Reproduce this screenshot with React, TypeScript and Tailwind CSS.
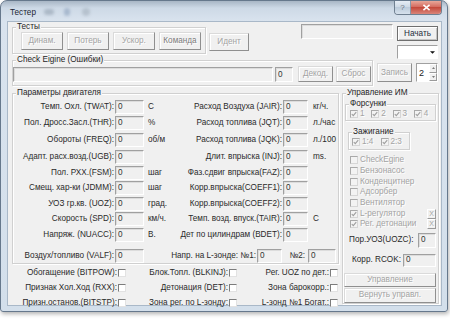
import React from 'react';

const DIS = "text-[#a3a3a3] [text-shadow:1px_1px_0_#ffffff]";

function Btn({ label, cls = '', dis = true }: { label: string; cls?: string; dis?: boolean }) {
    return (
        <div className={"flex items-center justify-center shrink-0 bg-[#f0f0f0] border border-t-[#dadada] border-l-[#dadada] border-r-[#8f8f8f] border-b-[#8f8f8f] shadow-[inset_1px_1px_0_#ffffff] " + (dis ? DIS : 'text-[#3a3a3a]') + ' ' + cls}>
            {label}
        </div>
    );
}

function Fld({ v = '0', cls = '' }: { v?: string; cls?: string }) {
    return (
        <div className={"flex items-center shrink-0 pl-[2px] bg-[#f0f0f0] border border-t-[#a0a0a0] border-l-[#a0a0a0] border-r-[#ffffff] border-b-[#ffffff] shadow-[inset_1px_1px_0_#dcdcdc] text-[#333] " + cls}>
            {v}
        </div>
    );
}

function Chk({ checked = false, dis = true, cls = '' }: { checked?: boolean; dis?: boolean; cls?: string }) {
    return (
        <div className={"w-[8px] h-[8px] shrink-0 border flex items-center justify-center " + (dis ? "border-t-[#a9a9a9] border-l-[#a9a9a9] border-r-[#d6d6d6] border-b-[#d6d6d6] bg-[#f3f3f3]" : "border-t-[#7c7c7c] border-l-[#7c7c7c] border-r-[#e2e2e2] border-b-[#e2e2e2] bg-white") + ' ' + cls}>
            {checked && (
                <svg viewBox="0 0 8 8" className="w-[6px] h-[6px]">
                    <path d="M1 4 L3 6.2 L7 1.5" fill="none" stroke="#9c9c9c" strokeWidth="1.4" />
                </svg>
            )}
        </div>
    );
}

function Group({ title, cls, children }: { title: string; cls: string; children?: React.ReactNode }) {
    return (
        <fieldset className={"min-w-0 shrink-0 border border-[#d0d0d0] shadow-[inset_1px_1px_0_#ffffff,1px_1px_0_#ffffff] " + cls}>
            <legend className="ml-[3px] px-[1px] leading-[8px] bg-[#f0f0f0] text-[#262626]">{title}</legend>
            {children}
        </fieldset>
    );
}

const rows = [
    { h: 'h-[16px]', l1: 'Темп. Охл. (TWAT):', u1: 'С', l2: 'Расход Воздуха (JAIR):', u2: 'кг/ч.' },
    { h: 'h-[16px]', l1: 'Пол. Дросс.Засл.(THR):', u1: '%', l2: 'Расход топлива (JQT):', u2: 'л./час' },
    { h: 'h-[18px]', l1: 'Обороты (FREQ):', u1: 'об/м', l2: 'Расход топлива (JQK):', u2: 'л./100' },
    { h: 'h-[16px]', l1: 'Адапт. расх.возд.(UGB):', u1: '', l2: 'Длит. впрыска (INJ):', u2: 'ms.' },
    { h: 'h-[15px]', l1: 'Пол. РХХ.(FSM):', u1: 'шаг', l2: 'Фаз.сдвиг впрыска(FAZ):', u2: '' },
    { h: 'h-[16px]', l1: 'Смещ. хар-ки (JDMM):', u1: 'шаг', l2: 'Корр.впрыска(COEFF1):', u2: '' },
    { h: 'h-[15px]', l1: 'УОЗ гр.кв. (UOZ):', u1: 'град.', l2: 'Корр.впрыска(COEFF2):', u2: '' },
    { h: 'h-[15px]', l1: 'Скорость (SPD):', u1: 'км/ч.', l2: 'Темп. возд. впуск.(TAIR):', u2: 'С' },
    { h: 'h-[18px]', l1: 'Напряж. (NUACC):', u1: 'В.', l2: 'Дет по цилиндрам (BDET):', u2: '' },
];

const flags = [
    ['Обогащение (BITPOW):', 'Блок.Топл. (BLKINJ):', 'Рег. UOZ по дет.:'],
    ['Признак Хол.Ход (RXX):', 'Детонация (DET):', 'Зона барокорр.:'],
    ['Призн.останов.(BITSTP):', 'Зона рег. по L-зонду:', 'L-зонд №1 Богат.:'],
];

const outputs = [
    { t: 'CheckEgine', c: false, x: false },
    { t: 'Бензонасос', c: false, x: false },
    { t: 'Конденцитнер', c: false, x: false },
    { t: 'Адсорбер', c: false, x: false },
    { t: 'Вентилятор', c: false, x: false },
    { t: 'L-регулятор', c: true, x: true },
    { t: 'Рег. детонации', c: true, x: true },
];

function App() {
    return (
        <div className="w-[450px] h-[319px] bg-white overflow-hidden font-['Liberation_Sans',Arial,sans-serif] text-[8.2px] leading-[10px] text-[#2a2a2a]">
            <div className="w-[448px] h-[312px] flex flex-col border border-[#66788c] rounded-t-[7px] rounded-b-[3px] bg-[linear-gradient(to_bottom,#a8b6c5_0px,#cdd9e6_7px,#d9e3ee_20px,#d3dfeb_100%)] shadow-[1px_2px_4px_rgba(0,0,0,0.3)]">
                {/* title bar */}
                <div className="h-[20px] flex items-start shrink-0">
                    <div className="ml-[9px] mt-[7px] text-[#1c2633]">Тестер</div>
                    <div className="ml-[8px] mt-[8px] w-[10px] h-[6px] rounded-full bg-[#8796a6] opacity-50 blur-[1.5px]" />
                    <div className="ml-[10px] mt-[7px] w-[6px] h-[8px] rounded-full bg-[#7e95b3] opacity-50 blur-[1.5px]" />
                    <div className="ml-[12px] mt-[7px] w-[8px] h-[8px] rounded-full bg-[#8e9aa6] opacity-40 blur-[1.5px]" />
                    <div className="ml-auto mr-[5px] flex h-[14px] border border-t-0 border-[#6f7f90] rounded-b-[4px] overflow-hidden">
                        <div className="w-[16px] flex items-center justify-center bg-[linear-gradient(to_bottom,#e6edf5,#cbd7e4_50%,#bccbdb_50%,#d6e1ec)] text-[#6b7785] text-[8px] border-r border-[#8a99a9]">?</div>
                        <div className="w-[30px] flex items-center justify-center bg-[linear-gradient(to_bottom,#e8a799,#d2665a_50%,#c44a3c_50%,#d9857a)]">
                            <svg viewBox="0 0 10 8" className="w-[9px] h-[7px]">
                                <path d="M1.5 1 L8.5 7 M8.5 1 L1.5 7" stroke="#ffffff" strokeWidth="1.8" />
                            </svg>
                        </div>
                    </div>
                </div>

                {/* client area */}
                <div className="ml-[6px] w-[435px] h-[285px] border border-[#a9b8c8] bg-[#f0f0f0] flex flex-col">
                    {/* top row */}
                    <div className="h-[34px] flex items-start shrink-0">
                        <Group title="Тесты" cls="ml-[4px] mt-[1px] w-[194px] h-[31px]">
                            <div className="flex gap-[4px] ml-[8px] mt-[1px]">
                                <Btn label="Динам." cls="w-[42px] h-[18px]" />
                                <Btn label="Потерь" cls="w-[42px] h-[18px]" />
                                <Btn label="Ускор." cls="w-[42px] h-[18px]" />
                                <Btn label="Команда" cls="w-[42px] h-[18px] !text-[#7c7c7c]" />
                            </div>
                        </Group>
                        <Btn label="Идент" cls="ml-[3px] mt-[11px] w-[40px] h-[18px]" />
                        <Fld v="" cls="ml-[52px] mt-[2px] w-[92px] h-[15px]" />
                        <div className="ml-[4px] w-[41px] flex flex-col">
                            <div className="mt-[4px] h-[15px] flex items-center justify-center bg-[#f0f0f0] border border-[#6f6f6f] shadow-[inset_1px_1px_0_#ffffff,inset_-1px_-1px_0_#c4c4c4] text-[#1f2d3c]">Начать</div>
                            <div className="mt-[4px] h-[14px] flex border border-t-[#a0a0a0] border-l-[#a0a0a0] border-r-[#ffffff] border-b-[#ffffff] bg-white">
                                <div className="flex-1" />
                                <div className="w-[10px] flex items-center justify-center">
                                    <svg viewBox="0 0 6 3" className="w-[5px] h-[3px]">
                                        <path d="M0 0 H6 L3 3 Z" fill="#111111" />
                                    </svg>
                                </div>
                            </div>
                        </div>
                    </div>

                    {/* check engine row */}
                    <div className="h-[30px] flex items-start shrink-0">
                        <Group title="Check Eigine (Ошибки)" cls="ml-[4px] w-[361px] h-[30px]">
                            <div className="flex items-start">
                                <Fld v="" cls="mt-[3px] w-[260px] h-[15px]" />
                                <Fld cls="ml-[2px] mt-[3px] w-[18px] h-[15px]" />
                                <Btn label="Декод." cls="ml-[5px] mt-[2px] w-[35px] h-[16px]" />
                                <Btn label="Сброс" cls="ml-[3px] mt-[2px] w-[35px] h-[16px]" />
                            </div>
                        </Group>
                        <Btn label="Запись" cls="ml-[4px] mt-[7px] w-[35px] h-[19px]" />
                        <div className="ml-[4px] mt-[7px] w-[22px] h-[19px] flex border border-t-[#a0a0a0] border-l-[#a0a0a0] border-r-[#ffffff] border-b-[#ffffff] bg-white">
                            <div className="flex-1 flex items-center pl-[2px] text-[9px] text-[#222]">2</div>
                            <div className="w-[8px] flex flex-col">
                                <div className="flex-1 flex items-center justify-center bg-[#f0f0f0] border border-t-[#ffffff] border-l-[#ffffff] border-r-[#9a9a9a] border-b-[#9a9a9a]">
                                    <svg viewBox="0 0 4 2" className="w-[3px] h-[2px]"><path d="M0 2 L2 0 L4 2 Z" fill="#555" /></svg>
                                </div>
                                <div className="flex-1 flex items-center justify-center bg-[#f0f0f0] border border-t-[#ffffff] border-l-[#ffffff] border-r-[#9a9a9a] border-b-[#9a9a9a]">
                                    <svg viewBox="0 0 4 2" className="w-[3px] h-[2px]"><path d="M0 0 L4 0 L2 2 Z" fill="#555" /></svg>
                                </div>
                            </div>
                        </div>
                    </div>

                    {/* main area */}
                    <div className="flex items-start flex-1">
                        <div className="w-[331px] flex flex-col shrink-0">
                            <Group title="Параметры двигателя" cls="ml-[4px] mt-[3px] w-[327px] h-[175px]">
                                <div className="pt-[2px] flex flex-col">
                                    {rows.map((r) => (
                                        <div key={r.l1} className={"flex items-center " + r.h}>
                                            <div className="w-[101px] flex justify-end whitespace-nowrap">{r.l1}</div>
                                            <Fld cls="ml-[1px] w-[29px] h-[14px]" />
                                            <div className="w-[30px] pl-[4px] whitespace-nowrap">{r.u1}</div>
                                            <div className="w-[108px] flex justify-end whitespace-nowrap">{r.l2}</div>
                                            <Fld cls="ml-[1px] w-[25px] h-[14px]" />
                                            <div className="pl-[5px] whitespace-nowrap">{r.u2}</div>
                                        </div>
                                    ))}
                                    <div className="flex items-center h-[14px] mt-[5px]">
                                        <div className="w-[101px] flex justify-end whitespace-nowrap">Воздух/топливо (VALF):</div>
                                        <Fld cls="ml-[1px] w-[29px] h-[14px]" />
                                        <div className="w-[112px] flex justify-end whitespace-nowrap">Напр. на L-зонде: №1:</div>
                                        <Fld cls="ml-[1px] w-[25px] h-[14px]" />
                                        <div className="w-[26px] flex justify-end pr-[3px]">№2:</div>
                                        <Fld cls="w-[28px] h-[14px]" />
                                    </div>
                                </div>
                            </Group>
                            <div className="ml-[4px] mt-[1px] flex flex-col">
                                {flags.map((row) => (
                                    <div key={row[0]} className="flex h-[15px] items-center">
                                        <div className="w-[115px] flex justify-end items-center pr-[1px] whitespace-nowrap">
                                            {row[0]}<Chk dis={false} cls="ml-[1px]" />
                                        </div>
                                        <div className="w-[111px] flex justify-end items-center pr-[1px] whitespace-nowrap">
                                            {row[1]}<Chk dis={false} cls="ml-[1px]" />
                                        </div>
                                        <div className="w-[101px] flex justify-end items-center pr-[1px] whitespace-nowrap">
                                            {row[2]}<Chk dis={false} cls="ml-[1px]" />
                                        </div>
                                    </div>
                                ))}
                            </div>
                        </div>

                        <Group title="Управление ИМ" cls="ml-[3px] mt-[3px] w-[97px] h-[215px]">
                            <Group title="Форсунки" cls="ml-[2px] mt-[3px] w-[91px] h-[21px]">
                                <div className="flex items-center h-[12px] ml-[4px]">
                                    {['1', '2', '3', '4'].map((n) => (
                                        <div key={n} className="w-[22px] flex items-center">
                                            <Chk checked />
                                            <span className={"ml-[2px] " + DIS}>{n}</span>
                                        </div>
                                    ))}
                                </div>
                            </Group>
                            <Group title="Зажигание" cls="ml-[5px] mt-[7px] w-[62px] h-[22px]">
                                <div className="flex items-center h-[12px] ml-[3px]">
                                    {['1:4', '2:3'].map((n) => (
                                        <div key={n} className="w-[31px] flex items-center">
                                            <Chk checked />
                                            <span className={"ml-[2px] " + DIS}>{n}</span>
                                        </div>
                                    ))}
                                </div>
                            </Group>
                            <div className="mt-[5px] flex flex-col">
                                {outputs.map((o) => (
                                    <div key={o.t} className="h-[10.7px] flex items-center pl-[7px]">
                                        <Chk checked={o.c} />
                                        <span className={"ml-[2px] whitespace-nowrap " + DIS}>{o.t}</span>
                                        {o.x && (
                                            <div className={"ml-auto mr-[2px] w-[9px] h-[10px] flex items-center justify-center bg-[#f0f0f0] border border-t-[#ffffff] border-l-[#ffffff] border-r-[#9a9a9a] border-b-[#9a9a9a] text-[7px] " + DIS}>X</div>
                                        )}
                                    </div>
                                ))}
                            </div>
                            <div className="mt-[3px] h-[15px] flex items-center">
                                <span className="pl-[6px] whitespace-nowrap">Пор.УОЗ(UOZC):</span>
                                <Fld cls="ml-auto mr-[2px] w-[18px] h-[15px]" />
                            </div>
                            <div className="mt-[6px] h-[13px] flex items-center">
                                <span className="pl-[9px] whitespace-nowrap">Корр. RCOK:</span>
                                <Fld cls="ml-auto mr-[2px] w-[33px] h-[13px]" />
                            </div>
                            <Btn label="Управление" cls="ml-[1px] mt-[6px] w-[92px] h-[14px]" />
                            <Btn label="Вернуть управл." cls="ml-[1px] mt-[1px] w-[92px] h-[15px]" />
                        </Group>
                    </div>
                </div>
            </div>
        </div>
    );
}

export default App;
